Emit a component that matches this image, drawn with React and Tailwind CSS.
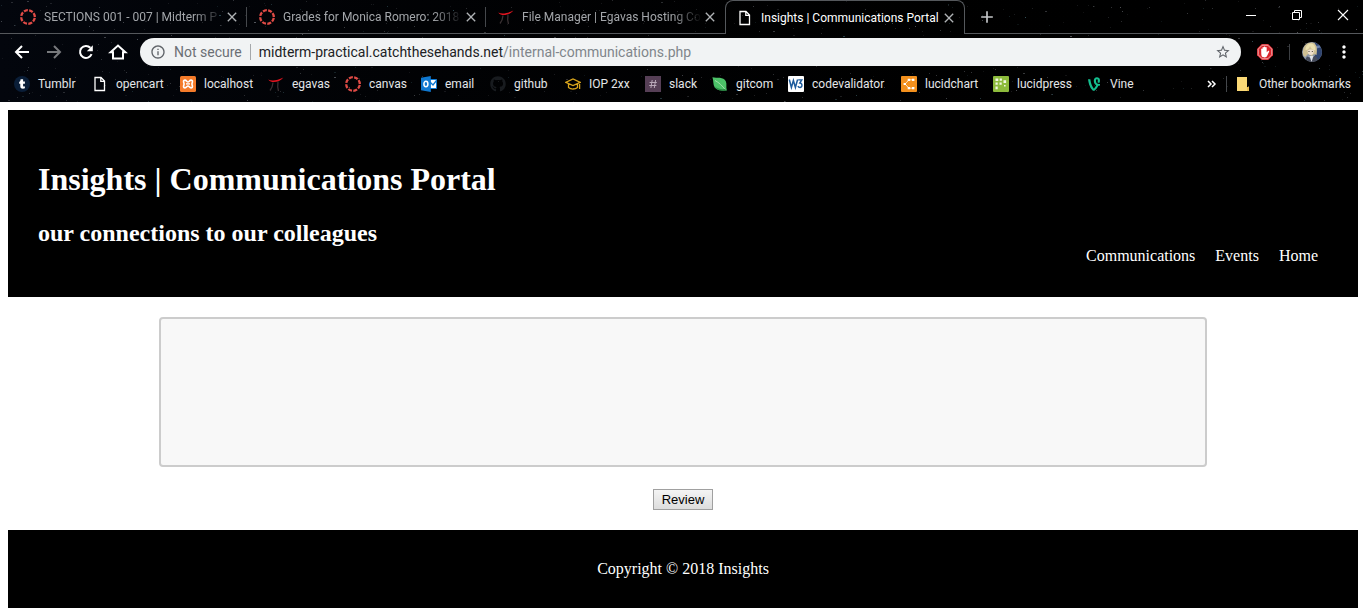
import React from "react";
import { MdStarBorder, MdMoreVert, MdOutlineInfo, MdClose, MdAdd } from "react-icons/md";
import { FaGithub, FaVine } from "react-icons/fa";

function seeded(seed) {
  let s = seed;
  return () => {
    s = (s * 16807) % 2147483647;
    return s / 2147483647;
  };
}

const rand = seeded(4211);
const STARS = Array.from({ length: 900 }, () => ({
  x: Math.round(rand() * 1920),
  y: Math.round(rand() * 102),
  o: 0.12 + rand() * rand() * 0.5,
  c: rand() > 0.8 ? "#5f93a0" : "#8b8f96",
}));

function Stars() {
  return (
    <svg className="absolute inset-0 h-full w-full" aria-hidden="true">
      {STARS.map((s, i) => (
        <rect key={i} x={s.x} y={s.y} width={i % 9 === 0 ? 2 : 1} height="1" fill={s.c} opacity={s.o} />
      ))}
    </svg>
  );
}

function CanvasIcon() {
  return (
    <svg viewBox="0 0 16 16" className="size-4 shrink-0" aria-hidden="true">
      <circle cx="8" cy="8" r="6.8" fill="none" stroke="#e04b46" strokeWidth="2.300" strokeDasharray="4 1.34" transform="rotate(8 8 8)" />
    </svg>
  );
}

function EgavasIcon() {
  return (
    <svg viewBox="0 0 16 16" className="size-4 shrink-0" fill="none" aria-hidden="true">
      <path d="M5 6.500C4.800 9 4 12 2 14.500M10 5.500C9.500 9 9.500 12 10.500 15" stroke="#3a3133" strokeWidth="1.300" />
      <path d="M.2 3.400C4 5.200 9 4.600 15.400 1.400C11.500 6.200 3.500 8 .2 3.400Z" fill="#e0141f" />
    </svg>
  );
}

function PageIcon() {
  return (
    <svg viewBox="0 0 16 16" className="size-4 shrink-0" fill="none" stroke="#fff" strokeWidth="1.300" aria-hidden="true">
      <path d="M3 1.500H9L12.500 5V14.500H3ZM8.800 1.500V5.300H12.500" />
    </svg>
  );
}

function TumblrIcon() {
  return (
    <svg viewBox="0 0 16 16" className="size-4 shrink-0" aria-hidden="true">
      <circle cx="8" cy="8" r="8" fill="#0a1e38" />
      <path d="M6.600 3.300H9.100V5.600H10.900V7.700H9.100V9.700C9.100 10.700 10 10.700 10.900 10.300V12.300C8.800 13.200 6.300 12.700 6.300 10.200V7.700H5.200V5.900C6.200 5.500 6.500 4.600 6.600 3.300Z" fill="#fff" />
    </svg>
  );
}

function XamppIcon() {
  return (
    <svg viewBox="0 0 16 16" className="size-4 shrink-0" aria-hidden="true">
      <rect width="16" height="16" rx="1.500" fill="#f47b2a" />
      <path d="M4.300 4.200C6.500 3.500 6.700 6 8 6S9.500 3.500 11.700 4.200C13.400 5 11.900 7 11.900 8S13.400 11 11.700 11.800C9.500 12.500 9.300 10 8 10S6.500 12.500 4.300 11.800C2.600 11 4.100 9 4.100 8S2.600 5 4.300 4.200Z" fill="none" stroke="#fff" strokeWidth="1.600" />
      <path d="M6 7.900H10" stroke="#fff" strokeWidth="1.400" />
    </svg>
  );
}

function OutlookIcon() {
  return (
    <svg viewBox="0 0 16 16" className="size-4 shrink-0" aria-hidden="true">
      <path d="M9 3.500H15.500V12.500H9Z" fill="#fff" stroke="#0f78d0" />
      <path d="M9 6L12 9L15.500 4.500" fill="none" stroke="#0f78d0" strokeWidth="1.300" />
      <path d="M0 1.800L9.800 0V16L0 14.200Z" fill="#0f78d0" />
      <ellipse cx="4.900" cy="8" rx="2" ry="2.700" fill="none" stroke="#fff" strokeWidth="1.500" />
    </svg>
  );
}

function CapIcon() {
  return (
    <svg viewBox="0 0 16 16" className="size-4 shrink-0" fill="none" stroke="#d9a51c" strokeWidth="1.300" aria-hidden="true">
      <path d="M.8 6.300L8 3L15.200 6.300L8 9.600ZM3.500 8V11.500C6 13.600 10 13.600 12.500 11.500V8M14.600 6.600V13" />
    </svg>
  );
}

function SlackIcon() {
  return (
    <svg viewBox="0 0 16 16" className="size-4 shrink-0" aria-hidden="true">
      <rect width="16" height="16" fill="#563f56" />
      <path d="M7.200 4L5.900 12M10.600 4L9.300 12M4.600 6.500H11.800M4.200 9.500H11.400" stroke="#b9a9b9" strokeWidth="1" />
    </svg>
  );
}

function LeafIcon() {
  return (
    <svg viewBox="0 0 16 16" className="size-4 shrink-0" aria-hidden="true">
      <path d="M.4 1.300C5 2.300 11.500 .6 13.800 5.300C15.200 8.500 13.600 11 14.900 14.500C11 14.700 5.200 15 2.700 11.500C.8 8.500 1.800 5 .4 1.300Z" fill="#4cc268" />
      <path d="M3 4.500C7 6.500 10.500 10 13.500 14" fill="none" stroke="#b8e6bd" strokeWidth=".8" />
      <path d="M3 10.500C6 13.300 10 13.300 13 13L14.500 14.500C9 15 4.500 14.500 3 10.500Z" fill="#2a8f46" />
    </svg>
  );
}

function W3Icon() {
  return (
    <svg viewBox="0 0 16 16" className="size-4 shrink-0" aria-hidden="true">
      <rect width="16" height="16" rx="1" fill="#fff" />
      <path d="M1.300 3.500L3.400 11.500L5.400 4.500L7.400 11.500L9.600 3.500" fill="none" stroke="#1d5b9c" strokeWidth="1.500" />
      <path d="M10.200 3.900H13.800L11.800 7C14.800 7.300 14.500 11.500 12 11.500C11 11.500 10.300 11 9.900 10.100" fill="none" stroke="#1d5b9c" strokeWidth="1.400" />
    </svg>
  );
}

function LucidchartIcon() {
  return (
    <svg viewBox="0 0 16 16" className="size-4 shrink-0" aria-hidden="true">
      <rect width="16" height="16" rx="1" fill="#f3901d" />
      <path d="M12 3.800H8L4 8L8 12.200H12" fill="none" stroke="#ffe3bf" strokeWidth="1" />
      <path d="M6.700 2.800h2.400v2.200H6.700zM11 2.800h2.400v2.200H11zM2.600 6.900H5v2.200H2.600zM6.700 11h2.400v2.200H6.700zM11 11h2.400v2.200H11z" fill="#fff" />
    </svg>
  );
}

function LucidpressIcon() {
  return (
    <svg viewBox="0 0 16 16" className="size-4 shrink-0" aria-hidden="true">
      <rect width="16" height="16" rx="1" fill="#8dbb3c" />
      <path d="M2.500 2.500h2.800v2.600H2.500zM6.700 2.500h2.200v2.200H6.700zM10.500 4.300h2.600v2.600h-2.600zM2.500 6.600h2.200v2.200H2.500zM6.500 6.500h2.200v2.200H6.500zM2.500 10.600h2.200v2.600H2.500zM11 9h1.600v1.600H11z" fill="#f2f8e4" />
    </svg>
  );
}

function FolderIcon() {
  return (
    <svg viewBox="0 0 16 16" className="size-4 shrink-0" aria-hidden="true">
      <path d="M2 1H12V11.500L14 10.500V15H2Z" fill="#fbd976" />
      <path d="M12 11.500L14 10.500V15H12Z" fill="#e9bd4f" />
    </svg>
  );
}

function BlockerIcon() {
  return (
    <svg viewBox="0 0 16 16" className="size-4 shrink-0" aria-hidden="true">
      <path d="M4.700 0H11.300L16 4.700V11.300L11.300 16H4.700L0 11.300V4.700Z" fill="#d8232a" />
      <path d="M5.200 1.200H10.800L14.800 5.200V10.800L10.800 14.800H5.200L1.200 10.800V5.200Z" fill="#d8232a" stroke="#f6d6d6" strokeWidth=".8" />
      <path d="M4.200 5.200C4.200 4.300 5.500 4.300 5.500 5.200V3.700C5.500 2.800 6.900 2.800 6.900 3.700V3.100C6.900 2.200 8.300 2.200 8.300 3.100V3.700C8.300 2.900 9.700 2.900 9.700 3.700V8.300L11 7.100C11.900 6.500 12.600 7.200 12 8L9.900 12.200C9 13.800 5.700 13.800 4.800 12.200C4.200 11 4.200 9 4.200 5.200Z" fill="#fff" />
    </svg>
  );
}

function Avatar() {
  return (
    <svg viewBox="0 0 20 20" className="size-5" aria-hidden="true">
      <defs>
        <clipPath id="avatar-clip"><circle cx="10" cy="10" r="10" /></clipPath>
      </defs>
      <g clipPath="url(#avatar-clip)">
        <rect width="20" height="20" fill="#8d97a8" />
        <rect x="13" width="7" height="20" fill="#2f4470" />
        <path d="M13 4L20 3V5L13 7Z" fill="#6f83ad" />
        <path d="M1 13C0 4 5 0 9 0.500C14 0 16 5 14.500 13L12 12L10 14L6 12L3 15Z" fill="#cfc093" />
        <path d="M5.500 8.500C7 7 10.500 7 12 8.500C12 11 10.500 13 8.800 13S5.500 11 5.500 8.500Z" fill="#efe0cf" />
        <path d="M6.400 9.500H7.600M9.800 9.500H11" stroke="#55503f" strokeWidth=".9" />
        <path d="M3.500 8C6 8 7.500 6 8 4C9 7 11 8 13.500 8.500C13.500 4 12 2 9 1.600C6 1.600 3.500 4 3.500 8Z" fill="#eadfae" />
        <path d="M2 20L5 14.500L9 16L13 13.500L18 20Z" fill="#454b5b" />
        <path d="M7.500 14L9.500 20L11.500 14Z" fill="#dfe3ea" />
      </g>
    </svg>
  );
}

const TABS = [
  { title: "SECTIONS 001 - 007 | Midterm P", Icon: CanvasIcon },
  { title: "Grades for Monica Romero: 2018", Icon: CanvasIcon },
  { title: "File Manager | Egavas Hosting Co", Icon: EgavasIcon },
];

const BOOKMARKS = [
  ["Tumblr", <TumblrIcon />],
  ["opencart", <PageIcon />],
  ["localhost", <XamppIcon />],
  ["egavas", <EgavasIcon />],
  ["canvas", <CanvasIcon />],
  ["email", <OutlookIcon />],
  ["github", <FaGithub className="size-4 shrink-0 text-[#181b1f]" />],
  ["IOP 2xx", <CapIcon />],
  ["slack", <SlackIcon />],
  ["gitcom", <LeafIcon />],
  ["codevalidator", <W3Icon />],
  ["lucidchart", <LucidchartIcon />],
  ["lucidpress", <LucidpressIcon />],
  ["Vine", <FaVine className="size-4 shrink-0 text-[#14bf8f]" />],
];

function TabStrip() {
  return (
    <div className="flex h-[34px] items-stretch">
      <div className="flex border-b border-[#55585c] pl-2">
        {TABS.map(({ title, Icon }, i) => (
          <div key={title} className="flex w-[239px] items-center pl-3">
            <Icon />
            <span className="ml-2 w-[180px] whitespace-nowrap text-[#a3a6aa] [mask-image:linear-gradient(to_right,#000_150px,transparent)]">{title}</span>
            <button aria-label={"Close " + title} className="text-[#b0b3b6]"><MdClose className="size-4" /></button>
            {i < 2 && <span className="ml-auto h-5 w-px bg-[#45484c]" />}
          </div>
        ))}
      </div>
      <div className="flex w-[240px] items-center rounded-t-lg border border-b-0 border-[#55585c] pl-[11px]">
        <PageIcon />
        <span className="ml-2 w-[180px] whitespace-nowrap text-white">Insights | Communications Portal</span>
        <button aria-label="Close Insights" className="text-[#b0b3b6]"><MdClose className="size-4" /></button>
      </div>
      <div className="flex flex-1 items-center border-b border-[#55585c] pl-3">
        <button aria-label="New tab" className="text-[#c3c5c7]"><MdAdd className="size-5" /></button>
        <div className="mb-1 ml-auto flex items-center gap-[6px] text-white">
          <button aria-label="Minimize" className="grid w-10 place-items-center">
            <svg className="size-3" viewBox="0 0 12 12" stroke="currentColor"><path d="M1 6.500H11" /></svg>
          </button>
          <button aria-label="Restore" className="grid w-10 place-items-center">
            <svg className="size-3" viewBox="0 0 12 12" fill="none" stroke="currentColor"><path d="M1.500 3.500H8.500V10.500H1.500ZM3.500 3.500V1.500H10.500V8.500H8.500" /></svg>
          </button>
          <button aria-label="Close window" className="grid w-10 place-items-center">
            <svg className="size-3" viewBox="0 0 12 12" fill="none" stroke="currentColor" strokeWidth="1.100"><path d="M1 1L11 11M11 1L1 11" /></svg>
          </button>
        </div>
      </div>
    </div>
  );
}

function NavIcon({ children }) {
  return (
    <svg viewBox="0 0 20 20" className="size-5" fill="none" stroke="currentColor" strokeWidth="2" aria-hidden="true">{children}</svg>
  );
}

function Toolbar() {
  return (
    <div className="mt-1 flex h-7 items-center">
      <div className="flex w-[140px] items-center gap-3 pl-3 text-white">
        <button aria-label="Back"><NavIcon><path d="M17 10H4.500M10 4L4 10L10 16" /></NavIcon></button>
        <button aria-label="Forward" className="text-[#77797c]"><NavIcon><path d="M3 10H15.500M10 4L16 10L10 16" /></NavIcon></button>
        <button aria-label="Reload">
          <NavIcon>
            <path d="M15.600 12.200A6 6 0 1 1 14.400 5.800" />
            <path d="M16.800 3.200V9.200H10.800Z" fill="currentColor" stroke="none" />
          </NavIcon>
        </button>
        <button aria-label="Home page"><NavIcon><path d="M2.600 10.200L10 3.500L17.400 10.200H15V16.600H5V10.200Z" /></NavIcon></button>
      </div>
      <div className="flex h-7 flex-1 items-center rounded-full bg-[#f1f3f4] px-[10px] text-sm">
        <MdOutlineInfo className="size-4 text-[#5f6368]" />
        <span className="ml-2 text-[#6b6f74]">Not secure</span>
        <span className="mx-2 h-4 w-px bg-[#a5a8ab]" />
        <a href="#" className="text-[#202124]">midterm-practical.catchthesehands.net<span className="text-[#80868b]">/internal-communications.php</span></a>
        <button aria-label="Bookmark this page" className="ml-auto text-[#5f6368]"><MdStarBorder className="size-4" /></button>
      </div>
      <div className="flex w-[122px] items-center pl-4">
        <button aria-label="Ad blocker"><BlockerIcon /></button>
        <span className="ml-4 h-4 w-px bg-[#3c3f43]" />
        <button aria-label="Profile" className="ml-3"><Avatar /></button>
        <button aria-label="Menu" className="ml-3 text-white"><MdMoreVert className="size-5" /></button>
      </div>
    </div>
  );
}

function BookmarksBar() {
  return (
    <div className="mt-1 flex h-7 items-center justify-between pr-3 pl-[14px] text-[#e4e6e8]">
      <nav aria-label="Bookmarks" className="grid grid-cols-[78px_88px_88px_77px_76px_69px_75px_80px_67px_76px_113px_92px_93px_64px]">
        {BOOKMARKS.map(([label, icon]) => (
          <a key={label} href="#" className="flex items-center gap-2 whitespace-nowrap">{icon}{label}</a>
        ))}
      </nav>
      <div className="flex items-center">
        <button aria-label="More bookmarks">
          <svg className="size-3" viewBox="0 0 12 12" fill="none" stroke="#fff" strokeWidth="1.500"><path d="M2 3L5 6L2 9M6 3L9 6L6 9" /></svg>
        </button>
        <span className="mx-2 h-4 w-px bg-[#45484c]" />
        <a href="#" className="flex items-center gap-2 whitespace-nowrap"><FolderIcon />Other bookmarks</a>
      </div>
    </div>
  );
}

export default function App() {
  return (
    <div className="min-h-screen bg-white font-['Liberation_Serif',serif] text-base text-black">
      <div className="relative h-[102px] overflow-hidden bg-linear-to-r from-[#03060d] to-black font-[Roboto,sans-serif] text-xs">
        <Stars />
        <div className="relative">
          <TabStrip />
          <Toolbar />
          <BookmarksBar />
        </div>
      </div>
      <div className="py-2 pr-[5px] pl-2">
        <header className="flex items-end justify-between bg-black px-[30px] pt-[50px] pb-[30px] text-white">
          <div className="pb-5">
            <h1 className="text-[32px] leading-[38px] font-bold">Insights | Communications Portal</h1>
            <h2 className="mt-[22px] text-2xl leading-[27px] font-bold">our connections to our colleagues</h2>
          </div>
          <nav aria-label="Main" className="flex gap-5 pr-[10px] leading-[22px]">
            <a href="#">Communications</a>
            <a href="#">Events</a>
            <a href="#">Home</a>
          </nav>
        </header>
        <main>
          <form className="flex flex-col items-center py-5" onSubmit={(e) => e.preventDefault()}>
            <textarea aria-label="Message" className="h-[150px] w-[1048px] max-w-full resize-none rounded border-2 border-[#ccc] bg-[#f8f8f8] px-5 py-3" />
            <button className="mt-[22px] h-[21px] border border-[#a0a0a0] bg-linear-to-b from-[#f4f4f4] to-[#dddddd] px-2 font-['Liberation_Sans',sans-serif] text-[13px] leading-[19px]">Review</button>
          </form>
        </main>
        <footer className="bg-black py-[30px] text-center leading-[18px] text-white">
          <p>Copyright © 2018 Insights</p>
        </footer>
      </div>
    </div>
  );
}
